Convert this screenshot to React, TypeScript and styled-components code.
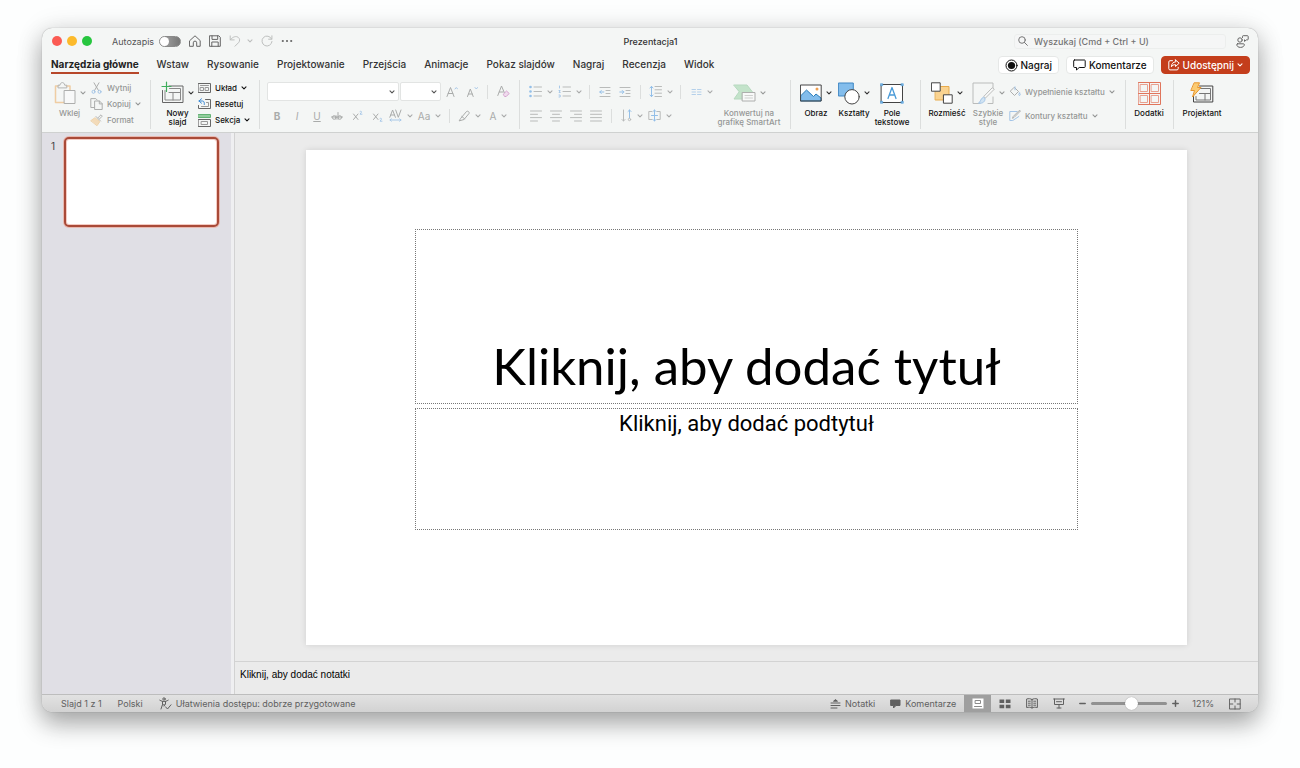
import React from "react";
import styled, { createGlobalStyle, css } from "styled-components";

const GlobalStyle = createGlobalStyle`
  *, *::before, *::after { box-sizing: border-box; }
  body {
    margin: 0;
    background: #fdfefe;
    font-family: Inter, "Liberation Sans", sans-serif;
    color: #222;
  }
  button, input, select {
    font: inherit;
    color: inherit;
    margin: 0;
  }
  button { background: none; border: 0; padding: 0; }
  h1, p { margin: 0; }
  svg { display: block; flex: none; }
`;

/* ---------- window ---------- */

const Desktop = styled.div`
  min-height: 100vh;
  padding: 28px 42px 56px;
  display: flex;
`;

const Window = styled.div`
  flex: 1;
  min-width: 0;
  display: flex;
  flex-direction: column;
  border-radius: 10px;
  overflow: hidden;
  background: #f4f6f5;
  box-shadow: 0 0 1px rgba(0, 0, 0, 0.4), 0 12px 24px rgba(0, 0, 0, 0.3), 0 2px 28px rgba(0, 0, 0, 0.12);
`;

const TitleBar = styled.header`
  display: grid;
  grid-template-columns: 1fr auto 1fr;
  align-items: center;
  height: 26px;
  padding: 0 9px 0 10px;
  font-size: 9px;
  color: #555;
`;

const TitleStart = styled.div`
  display: flex;
  align-items: center;
  gap: 8px;
`;

const TitleEnd = styled.div`
  display: flex;
  justify-content: flex-end;
  align-items: center;
  gap: 10px;
`;

const Lights = styled.div`
  display: flex;
  gap: 5px;
  margin-right: 12px;
`;

const Light = styled.button<{ $color: string }>`
  width: 10px;
  height: 10px;
  border-radius: 50%;
  background: ${(p) => p.$color};
`;

const AutoSave = styled.label`
  display: flex;
  align-items: center;
  gap: 5px;
`;

const Toggle = styled.input`
  appearance: none;
  width: 22px;
  height: 11px;
  margin: 0;
  border-radius: 6px;
  background: linear-gradient(90deg, #aaa, #777);
  display: flex;
  align-items: center;
  border: 1px solid #8a8a8a;
  &::before {
    content: "";
    width: 9px;
    height: 9px;
    border-radius: 50%;
    background: #fff;
  }
`;

const TitleButton = styled.button<{ $faded?: boolean }>`
  display: flex;
  align-items: center;
  gap: 6px;
  color: ${(p) => (p.$faded ? "#bdbfbe" : "#666")};
`;

const DocTitle = styled.div`
  font-weight: 500;
  color: #333;
`;

const SearchBox = styled.label`
  display: flex;
  align-items: center;
  gap: 6px;
  width: 212px;
  height: 15px;
  padding: 0 3px;
  border: 1px solid #eceeed;
  border-radius: 3px;
  color: #777;
  background: #f5f6f6;
`;

const SearchInput = styled.input`
  flex: 1;
  min-width: 0;
  border: 0;
  padding: 0;
  background: transparent;
  font-weight: 500;
  &::placeholder { color: #737373; opacity: 1; }
`;

/* ---------- tabs ---------- */

const TabRow = styled.div`
  display: flex;
  align-items: center;
  height: 22px;
  padding: 0 8px 0 9px;
`;

const Tabs = styled.nav`
  display: flex;
  gap: 18px;
  flex: 1;
  align-self: stretch;
`;

const Tab = styled.button<{ $active?: boolean }>`
  height: 20px;
  padding-top: 2px;
  font-size: 10px;
  line-height: 16px;
  font-weight: ${(p) => (p.$active ? 700 : 500)};
  color: ${(p) => (p.$active ? "#222" : "#333")};
  border-bottom: 2px solid ${(p) => (p.$active ? "#b7472a" : "transparent")};
  white-space: nowrap;
`;

const Actions = styled.div`
  display: flex;
  gap: 7px;
`;

const ActionButton = styled.button<{ $primary?: boolean }>`
  display: flex;
  align-items: center;
  gap: 3px;
  height: 18px;
  padding: 0 6px;
  border-radius: 4px;
  font-size: 10px;
  font-weight: 500;
  white-space: nowrap;
  background: ${(p) => (p.$primary ? "#c43e1c" : "#fff")};
  color: ${(p) => (p.$primary ? "#fff" : "#111")};
  border: 1px solid ${(p) => (p.$primary ? "#c43e1c" : "#e6e8e7")};
`;

/* ---------- ribbon ---------- */

const Ribbon = styled.div`
  display: flex;
  height: 57px;
  padding: 4px 0 3px;
  border-bottom: 1px solid #cfd1d0;
  font-size: 9px;
`;

const Group = styled.div<{ $width: number; $last?: boolean; $pad?: number }>`
  display: flex;
  flex: none;
  width: ${(p) => p.$width}px;
  padding-left: ${(p) => p.$pad ?? 6}px;
  ${(p) => !p.$last && css`border-right: 1px solid #dcdedd;`}
`;

const BigButton = styled.button<{ $width: number; $faded?: boolean }>`
  display: flex;
  flex-direction: column;
  align-items: center;
  justify-content: flex-start;
  flex: none;
  width: ${(p) => p.$width}px;
  font-size: 8px;
  line-height: 9px;
  font-weight: 500;
  color: ${(p) => (p.$faded ? "#949695" : "#111")};
  white-space: nowrap;
`;

const BigIcon = styled.span<{ $faded?: boolean }>`
  display: flex;
  align-items: center;
  gap: 4px;
  height: 26px;
  margin-bottom: 3px;
  color: ${(p) => (p.$faded ? "#999b9a" : "#333")};
  > svg:first-child { opacity: ${(p) => (p.$faded ? 0.4 : 1)}; }
`;

const Stack = styled.div<{ $loose?: boolean }>`
  display: flex;
  flex-direction: column;
  gap: ${(p) => (p.$loose ? 8 : 0)}px;
  padding-top: ${(p) => (p.$loose ? 4 : 0)}px;
`;

const SmallButton = styled.button<{ $faded?: boolean }>`
  display: flex;
  align-items: center;
  flex: none;
  gap: 4px;
  height: 16px;
  font-size: 8px;
  font-weight: 500;
  white-space: nowrap;
  color: ${(p) => (p.$faded ? "#949695" : "#111")};
  > svg:first-child { opacity: ${(p) => (p.$faded ? 0.4 : 1)}; }
`;

const ToolRows = styled.div`
  display: flex;
  flex-direction: column;
  gap: 5px;
  padding-top: 2px;
`;

const ToolRow = styled.div`
  display: flex;
  align-items: center;
  height: 19px;
`;

const Tool = styled.button<{ $width?: number }>`
  display: flex;
  align-items: center;
  justify-content: center;
  gap: 5px;
  flex: none;
  width: ${(p) => p.$width ?? 20}px;
  height: 18px;
  font-size: 10px;
  color: #a9abaa;
  white-space: nowrap;
`;

const Rule = styled.span`
  flex: none;
  width: 1px;
  height: 14px;
  margin: 0 5px;
  background: #dcdedd;
`;

const PickerBox = styled.span<{ $width: number }>`
  display: flex;
  align-items: center;
  width: ${(p) => p.$width}px;
  height: 19px;
  margin-right: 1px;
  padding-right: 3px;
  background: #fff;
  border: 1px solid #e2e4e3;
  border-radius: 2px;
  color: #555;
`;

const Picker = styled.select`
  appearance: none;
  flex: 1;
  min-width: 0;
  height: 17px;
  border: 0;
  background: transparent;
`;

/* ---------- workspace ---------- */

const Workspace = styled.div`
  display: flex;
  flex: 1;
`;

const SlideList = styled.aside`
  display: flex;
  align-items: flex-start;
  flex: none;
  gap: 9px;
  width: 192px;
  padding: 4px 0 0 9px;
  background: #e0dfe5;
  border-right: 3px solid #efeff1;
  font-size: 10px;
  line-height: 18px;
  color: #444;
`;

const Thumb = styled.button`
  width: 155px;
  height: 90px;
  background: #fff;
  border: 2px solid #a94a38;
  border-radius: 5px;
  box-shadow: 0 0 0 1px #e8b8b0, inset 0 0 0 1px #f4cbc3;
`;

const Editor = styled.main`
  flex: 1;
  min-width: 0;
  display: flex;
  flex-direction: column;
  background: #ebebeb;
  border-left: 1px solid #d2d2d2;
`;

const Canvas = styled.div`
  padding: 17px 71px 16px;
`;

const Slide = styled.section`
  aspect-ratio: 881 / 495;
  display: flex;
  flex-direction: column;
  gap: 4px;
  padding: 79px 109px 115px;
  background: #fff;
  box-shadow: 0 0 6px rgba(0, 0, 0, 0.12);
  text-align: center;
  color: #000;
`;

const Holder = styled.div<{ $grow: number; $end?: boolean }>`
  display: flex;
  flex: ${(p) => p.$grow} 1 0;
  flex-direction: column;
  justify-content: ${(p) => (p.$end ? "flex-end" : "flex-start")};
  border: 1px dotted #777;
`;

const SlideTitle = styled.h1`
  font-family: Lato, "Noto Sans", sans-serif;
  font-size: 51px;
  line-height: 74px;
  font-weight: 400;
`;

const SlideSubtitle = styled.p`
  font-family: Roboto, sans-serif;
  font-size: 22px;
  line-height: 29px;
  font-weight: 400;
`;

const Notes = styled.div`
  flex: 1;
  min-height: 33px;
  padding: 5px;
  border-top: 1px solid #d3d3d3;
  font-family: "Liberation Sans", Arial, sans-serif;
  font-size: 10px;
  line-height: 15px;
  color: #000;
`;

/* ---------- status bar ---------- */

const StatusBar = styled.footer`
  display: flex;
  align-items: center;
  height: 18px;
  padding: 0 17px 0 19px;
  background: linear-gradient(#e2e2e2, #d2d2d2);
  border-top: 1px solid #bdbdbd;
  font-size: 9px;
  color: #606060;
`;

const StatusInfo = styled.div`
  display: flex;
  align-items: center;
  flex: 1;
  gap: 16px;
`;

const StatusButton = styled.button`
  display: flex;
  align-items: center;
  gap: 4px;
  white-space: nowrap;
`;

const StatusTools = styled.div`
  display: flex;
  align-items: center;
  align-self: stretch;
  gap: 15px;
`;

const Views = styled.div`
  display: flex;
  align-self: stretch;
  margin-left: -7px;
`;

const View = styled.button<{ $active?: boolean }>`
  display: flex;
  align-items: center;
  justify-content: center;
  width: 27px;
  background: ${(p) => (p.$active ? "#9f9f9f" : "transparent")};
  color: ${(p) => (p.$active ? "#fff" : "#606060")};
`;

const Zoom = styled.div`
  display: flex;
  align-items: center;
  gap: 5px;
  margin: 0 -2px 0 -8px;
`;

const ZoomSlider = styled.input`
  appearance: none;
  width: 76px;
  height: 13px;
  margin: 0;
  background: transparent;
  &::-webkit-slider-runnable-track {
    height: 3px;
    border-radius: 2px;
    background: #919191;
  }
  &::-webkit-slider-thumb {
    appearance: none;
    width: 13px;
    height: 13px;
    margin-top: -5px;
    border-radius: 50%;
    background: #fff;
    box-shadow: 0 0 1px rgba(0, 0, 0, 0.4);
  }
`;

/* ---------- icons ---------- */

type IconProps = { w: number; h: number; children: React.ReactNode; sw?: number };

const Icon = ({ w, h, children, sw = 1 }: IconProps) => (
  <svg
    width={w}
    height={h}
    viewBox={`0 0 ${w} ${h}`}
    fill="none"
    stroke="currentColor"
    strokeWidth={sw}
    strokeLinecap="round"
    strokeLinejoin="round"
    aria-hidden="true"
  >
    {children}
  </svg>
);

const Chevron = () => (
  <Icon w={6} h={4} sw={1.1}>
    <path d="M1 .9 3 2.900 5 .9" />
  </Icon>
);

const HomeIcon = () => (
  <Icon w={12} h={12}>
    <path d="M.8 5.6 6 .8l5.200 4.800V11.300H7.700V7.800a1.700 1.700 0 0 0-3.400 0v3.500H.8Z" />
  </Icon>
);
const SaveIcon = () => (
  <Icon w={12} h={12}>
    <path d="M.8.8h9l1.500 1.500v9H.8ZM3 .8v3.600h5.700V.8M2.800 11.300V7h6.400v4.300" />
  </Icon>
);
const UndoIcon = () => (
  <Icon w={12} h={12}>
    <path d="M1.200.9v4h4M1.300 4.800C4 1.500 7 .9 9 2.200c2 1.400 2.200 3.700.5 5.500L6 11.200" />
  </Icon>
);
const RedoIcon = () => (
  <Icon w={12} h={12}>
    <path d="M10.900.8v3.400H7.600M10.600 4A5 5 0 1 0 11 6.500" />
  </Icon>
);
const MoreIcon = () => (
  <Icon w={12} h={4}>
    <g fill="currentColor" stroke="none">
      <circle cx="1.800" cy="2" r="1.100" />
      <circle cx="6" cy="2" r="1.100" />
      <circle cx="10.200" cy="2" r="1.100" />
    </g>
  </Icon>
);
const SearchIcon = () => (
  <Icon w={10} h={10}>
    <circle cx="4" cy="4" r="3.300" />
    <path d="m6.400 6.400 3 3" />
  </Icon>
);
const PresenceIcon = () => (
  <Icon w={13} h={13}>
    <circle cx="4" cy="5" r="2.200" />
    <path d="M1.500 8.800h6c.6 0 .8.300.8.900 0 1.500-1.500 2.700-3.800 2.700S.8 11.200.8 9.700c0-.6.2-.9.700-.9ZM6.500 2.500V1.400c0-.4.200-.7.700-.7h4.200c.5 0 .8.300.8.700v2.700c0 .5-.3.800-.8.800h-1L8.500 6.400V4.900" />
  </Icon>
);
const RecordIcon = () => (
  <Icon w={13} h={13}>
    <circle cx="6.500" cy="6.500" r="5.500" />
    <circle cx="6.500" cy="6.500" r="3.600" fill="currentColor" stroke="none" />
  </Icon>
);
const CommentIcon = () => (
  <Icon w={13} h={12}>
    <path d="M1.500 1h10c.4 0 .7.300.7.700v6c0 .5-.3.800-.7.800H6.200L3.500 11V8.500h-2c-.5 0-.8-.3-.8-.8v-6c0-.4.300-.7.800-.7Z" />
  </Icon>
);
const ShareIcon = () => (
  <Icon w={12} h={12}>
    <path d="M4.500 1.700H2c-.7 0-1.200.5-1.200 1.200v6.800c0 .7.500 1.200 1.200 1.200h7c.7 0 1.200-.5 1.200-1.200V8.300M7.500.9l3.700 3.300-3.700 3.300V5.700C5.500 5.600 4.300 6.300 3.400 7.800 3.500 4.800 5 3 7.500 2.800Z" />
  </Icon>
);

const PasteIcon = () => (
  <Icon w={22} h={24}>
    <path d="M4 5H1.500v16.500H10M12.500 5H16v4" stroke="#e8912a" strokeWidth="1.500" />
    <path d="M4 6.500V4.200h2c.4-3.500 4.300-3.500 4.700 0h2.100v2.300Z" stroke="#555" />
    <path d="M10.500 9.500h10.500v13H10.500Z" stroke="#444" fill="#fff" />
  </Icon>
);
const CutIcon = () => (
  <Icon w={13} h={12}>
    <path d="m4 .8 4.500 7.700M9 .8 4.500 8.500" stroke="#444" />
    <circle cx="3.500" cy="9.800" r="1.500" stroke="#2b7cd3" />
    <circle cx="9.500" cy="9.800" r="1.500" stroke="#2b7cd3" />
  </Icon>
);
const CopyIcon = () => (
  <Icon w={13} h={12}>
    <path d="M4.500 9.500H.8V.6h5l1.500 1.500M5 3h4.500l2.700 2.700v5.800H5ZM9.300 3v2.900h2.900" stroke="#444" />
  </Icon>
);
const FormatIcon = () => (
  <Icon w={13} h={12}>
    <path d="m8 3.800 3-3 1.300 1.300-3 3" stroke="#555" />
    <path d="m1 6.500 4-2.800 4.800 4-2.600 3.700Z" fill="#f3b562" stroke="#e5a040" />
    <path d="m6 2.500 4.500 4.500" stroke="#555" />
  </Icon>
);

const NewSlideIcon = () => (
  <Icon w={23} h={24}>
    <path d="M1.500 9.500v12h20.500V5H8" stroke="#666" />
    <path d="M4 9.500V19h15.500V7.500H8.500M8 11.500h11.500M12 11.500V19" stroke="#888" />
    <path d="M5.500 1v9.500M1 5.500h9" stroke="#3fae5c" strokeWidth="1.200" />
  </Icon>
);
const LayoutIcon = () => (
  <Icon w={13} h={12}>
    <path d="M.5 1.500h12v9H.5Z" stroke="#666" />
    <path d="M2.500 3.500h8M2.500 5.500h3v3h-3ZM7.500 5.500h3v3h-3Z" stroke="#999" />
  </Icon>
);
const ResetIcon = () => (
  <Icon w={13} h={12}>
    <path d="M7.500 1.500h5v9H.5v-3" stroke="#666" />
    <path d="M3.500 8.500h7v-4h-2" stroke="#999" />
    <path d="M3.500.8.900 3l2.600 2.200M1 3h3.500C6 3 6.500 4.500 6.300 6.500" stroke="#3d8bd6" />
  </Icon>
);
const SectionIcon = () => (
  <Icon w={13} h={13}>
    <path d="M.5.500h12v3H.5Z" fill="#93cd9e" stroke="#63b274" />
    <path d="M.5 5.500h12v7H.5Z" stroke="#666" />
    <path d="M3.500 7.500h6v3h-6Z" stroke="#999" />
  </Icon>
);

const EraserIcon = () => (
  <Icon w={13} h={13}>
    <path d="m.8 10.500 3.700-9.500 3 7M2.200 7h4" stroke="#a9abaa" />
    <path d="m6.500 9 3-3 2.700 2.500-3 3H8Z" stroke="#d5a3cf" fill="#f0dcee" />
  </Icon>
);
const GrowIcon = ({ up }: { up?: boolean }) => (
  <Icon w={12} h={12}>
    <path d={up ? "m1 10.500 3.500-9 3.500 9M2.200 7.500h4.600" : "m1.500 10.500 2.800-7.500 2.900 7.500M2.500 8h3.700"} stroke="#a9abaa" />
    <path d={up ? "m9 3 1.300-1.500L11.600 3" : "m9 1.500 1.300 1.500 1.300-1.500"} stroke="#a8c8e8" />
  </Icon>
);
const StrikeIcon = () => (
  <Icon w={12} h={10}>
    <circle cx="3.200" cy="6.500" r="1.800" />
    <path d="M5 4.700v3.600M7 1.500v6.800M.5 6h11" />
    <circle cx="8.800" cy="6.500" r="1.800" />
  </Icon>
);
const ScriptIcon = ({ sub }: { sub?: boolean }) => (
  <Icon w={11} h={12}>
    <path d="m1.500 4 4.500 5.500M6 4 1.500 9.500" />
    <path d={sub ? "M8 8.500c1-.7 2 .1 1.300 1l-1.300 1.700h2" : "M8 1.500c1-.7 2 .1 1.300 1L8 4.200h2"} stroke="#a8c8e8" />
  </Icon>
);
const SpacingIcon = () => (
  <Icon w={13} h={13}>
    <path d="M.8 8.300 3.600 1l2.800 7.300M1.800 6h3.600M6.700 1l2.600 7.300L12 1" />
    <path d="M1 11h11M2.300 9.800 1 11l1.300 1.200M10.700 9.800 12 11l-1.300 1.200" stroke="#a8c8e8" />
  </Icon>
);
const HighlightIcon = () => (
  <Icon w={12} h={12}>
    <path d="M3 8 8.500 1.500c1.200-1 3.300.5 2.500 2L6 9.500 1.500 10.800ZM3.800 6.500l3 2.500" />
  </Icon>
);

const BulletsIcon = ({ numbered }: { numbered?: boolean }) => (
  <Icon w={13} h={13}>
    <path d="M5 2h7.500M5 6.500h7.500M5 11h7.500" stroke="#b9bbba" />
    {numbered ? (
      <path d="M1.500 1v2M1 5.500h1.200L1 7.500h1.200M1 10h1.200v2H1" stroke="#a8c8e8" />
    ) : (
      <g fill="#93bfe8" stroke="none">
        <circle cx="1.500" cy="2" r="1.300" />
        <circle cx="1.500" cy="6.500" r="1.300" />
        <circle cx="1.500" cy="11" r="1.300" />
      </g>
    )}
  </Icon>
);
const IndentIcon = ({ more }: { more?: boolean }) => (
  <Icon w={12} h={12}>
    <path d="M1 1.500h10M7 4.500h4M7 7.500h4M1 10.500h10" stroke="#b9bbba" />
    <path d={more ? "M.8 6h4M3.300 4.500 4.800 6 3.300 7.500" : "M4.800 6h-4M2.300 4.500.8 6l1.500 1.500"} stroke="#93bfe8" />
  </Icon>
);
const LineSpacingIcon = () => (
  <Icon w={13} h={13}>
    <path d="M6 1.500h6.500M6 4.800h6.500M6 8.200h6.500M6 11.500h6.500" stroke="#b9bbba" />
    <path d="M2.500 1.500v10M1 3l1.500-1.700L4 3M1 10l1.500 1.700L4 10" stroke="#93bfe8" />
  </Icon>
);
const ColumnsIcon = () => (
  <Icon w={11} h={8}>
    <path d="M1 1.500h3.500M1 4h3.500M1 6.500h3.500M6.500 1.500H10M6.500 4H10M6.500 6.500H10" stroke="#b4d0ea" />
  </Icon>
);
const AlignIcon = ({ kind }: { kind: "left" | "center" | "right" | "full" }) => {
  const paths = {
    left: "M.5 1h11M.5 4.300h7M.5 7.600h11M.5 11h7",
    center: "M.5 1h11M2.500 4.300h7M.5 7.600h11M2.500 11h7",
    right: "M.5 1h11M4.500 4.300h7M.5 7.600h11M4.500 11h7",
    full: "M.5 1h11M.5 4.300h11M.5 7.600h11M.5 11h11",
  };
  return (
    <Icon w={12} h={12}>
      <path d={paths[kind]} stroke="#b9bbba" />
    </Icon>
  );
};
const DirectionIcon = () => (
  <Icon w={11} h={13}>
    <path d="M2.500 1v11M1 10.500 2.500 12 4 10.500" stroke="#b9bbba" />
    <path d="M8.500 9V1M7 2.500 8.500 1 10 2.500" stroke="#93bfe8" />
    <circle cx="8.500" cy="10.500" r="1.200" stroke="#b9bbba" />
  </Icon>
);
const AlignTextIcon = () => (
  <Icon w={13} h={13}>
    <path d="M4 2.500H.8v8H4M9 2.500h3.200v8H9" stroke="#b9bbba" />
    <path d="M6.500 1v11M5 2.500 6.500 1 8 2.500M5 10.500 6.500 12 8 10.500M3.500 6.500h6" stroke="#93bfe8" />
  </Icon>
);
const SmartArtIcon = () => (
  <Icon w={23} h={20}>
    <path d="M1 2h13l5.500 7-5.500 7H1l5-7Z" fill="#7cc98c" stroke="#5cae70" />
    <path d="M9.500 9.500H22v8.500H9.500Z" fill="#fff" stroke="#444" />
    <path d="M12 12.500h7.500M12 15h7.500" stroke="#999" />
  </Icon>
);

const PictureIcon = () => (
  <Icon w={22} h={18}>
    <path d="M.8 1h20.400v16H.8Z" fill="#fff" stroke="none" />
    <path d="M1 11.500 6.500 6l7 6.500 2.500-2.500 5 4v3H1Z" fill="#83bdec" stroke="#2b7cb8" />
    <path d="M.8 1h20.400v16H.8Z" stroke="#444" />
    <circle cx="17" cy="5" r="1.500" fill="#f0a050" stroke="none" />
  </Icon>
);
const ShapesIcon = () => (
  <Icon w={22} h={23}>
    <path d="M.8 1h14.500v13H.8Z" fill="#83bdec" stroke="#3f87c4" />
    <circle cx="14" cy="14.800" r="7.200" fill="#fff" stroke="#444" />
  </Icon>
);
const TextBoxIcon = () => (
  <Icon w={24} h={21}>
    <path d="M1.500 1.500h21v18h-21Z" fill="#fff" stroke="#444" />
    <path d="m8 15.500 4-11 4 11M9.400 12h5.200" stroke="#4a9bd8" strokeWidth="1.300" />
    <path d="M.7.700h2v2h-2ZM21.300.700h2v2h-2ZM.7 18.300h2v2h-2ZM21.300 18.300h2v2h-2Z" fill="#83bdec" stroke="#4a9bd8" strokeWidth=".6" />
  </Icon>
);
const ArrangeIcon = () => (
  <Icon w={22} h={22}>
    <path d="M4.500 4.500h13.500V18H4.500Z" fill="#fad390" stroke="#e8ab4c" />
    <path d="M.8.800h8.400v8.400H.8ZM12.800 12.800h8.400v8.400h-8.400Z" fill="#fff" stroke="#444" />
  </Icon>
);
const StylesIcon = () => (
  <Icon w={23} h={23}>
    <path d="M8 21.500H1V1h20v5M16 21.500h5V15" stroke="#666" />
    <path d="M22 7.500 13.500 16l-1.800-1.500L20 6Z" fill="#fff" stroke="#666" />
    <path d="M13 16.500c.5 3-2.500 5.500-6.500 4.500 2.500-1 1.700-4.500 4.500-5.500Z" fill="#9cc8f0" stroke="#2b7cd3" />
  </Icon>
);
const FillIcon = () => (
  <Icon w={12} h={12}>
    <path d="m5.500 1.500 4 4-4 4-4-4Z" stroke="#444" />
    <path d="M6 .8v3M10.500 7c1 1.300 1 2.300 0 2.500-1-.2-1-1.200 0-2.500Z" stroke="#2b7cd3" />
  </Icon>
);
const OutlineIcon = () => (
  <Icon w={12} h={12}>
    <path d="M8 1.500H.8v9h3l6-4" stroke="#2b7cd3" />
    <path d="M11.200 1.200 5 7.500l-1.500.8.600-1.700L10 .700Z" stroke="#444" />
  </Icon>
);
const AddinsIcon = () => (
  <Icon w={23} h={23} sw={1}>
    <path d="M.5.500h22v22H.5ZM11.500.5v22M.5 11.500h22" stroke="#e0755c" />
    <path d="M2.500 2.500h7v7h-7ZM13.500 2.500h7v7h-7ZM2.500 13.500h7v7h-7ZM13.500 13.500h7v7h-7Z" stroke="#e8a08f" />
  </Icon>
);
const DesignerIcon = () => (
  <Icon w={24} h={23}>
    <path d="M9.500 4h13.300v16H3.500v-6" stroke="#444" />
    <path d="M6 14.500V18h14.500V6.500h-11M9.500 11.500h11M15 11.500V18" stroke="#777" />
    <path d="M4.500.8h5L7.500 5.500h3.500L2.500 15l2-6.500H1.200Z" fill="#fbcb72" stroke="#e8962e" />
  </Icon>
);

const AccessIcon = () => (
  <Icon w={13} h={13}>
    <circle cx="5" cy="2" r="1.200" />
    <path d="M.8 3.200c1.700 1 3 1.300 4.200 1.300s2.600-.3 4.200-1.300M3.500 4.500v3L2 12M6.500 4.500v2.700L5 9M3.500 7.800h2M6.500 9.800 8.500 12 12 7.800" />
  </Icon>
);
const NotesIcon = () => (
  <Icon w={11} h={10}>
    <path d="M1 4h9M1 6.500h9M1 9h6" />
    <path d="M3.800 2 5.500.6 7.200 2Z" fill="currentColor" />
  </Icon>
);
const SolidCommentIcon = () => (
  <Icon w={11} h={10}>
    <path d="M1 1h9v5.500H6L3.500 9V6.500H1Z" fill="currentColor" />
  </Icon>
);
const NormalViewIcon = () => (
  <Icon w={12} h={11}>
    <path d="M.5.500h11v10H.5Z" fill="#fff" stroke="none" />
    <path d="M3.500 2.500h5v3h-5ZM2.500 8.500h7" stroke="#8a8a8a" />
  </Icon>
);
const SorterIcon = () => (
  <Icon w={12} h={10}>
    <path d="M.5.500h4.700V4H.5ZM6.800.500h4.700V4H6.800ZM.5 5.800h4.700v3.500H.5ZM6.800 5.800h4.700v3.500H6.800Z" fill="currentColor" stroke="none" />
  </Icon>
);
const ReadingIcon = () => (
  <Icon w={12} h={11}>
    <path d="M6 1.500v8.500M6 1.500C4.500.500 2.500.500.6 1v8.500c2-.4 4-.4 5.400.5 1.400-.9 3.400-.9 5.400-.5V1C9.500.500 7.500.500 6 1.500ZM2.300 3.200h2M2.300 5.200h2M2.300 7.200h2M7.700 3.200h2M7.700 5.200h2M7.700 7.200h2" />
  </Icon>
);
const ShowIcon = () => (
  <Icon w={12} h={11}>
    <path d="M.6 1h10.800M1.500 1v5.500h9V1M3.500 3.700h5M6 6.500V10M4 10h4" />
  </Icon>
);
const FitIcon = () => (
  <Icon w={12} h={12}>
    <path d="M.8 1h10.400v10H.8ZM6 1v3M6 8v3M.8 6h3M8.200 6h3" />
  </Icon>
);
const SignIcon = ({ plus }: { plus?: boolean }) => (
  <Icon w={7} h={7} sw={1}>
    <path d={plus ? "M.8 3.500h5.400M3.500.800v5.400" : "M.8 3.500h5.400"} strokeWidth="1.500" />
  </Icon>
);

/* ---------- page ---------- */

const TABS = [
  "Narzędzia główne", "Wstaw", "Rysowanie", "Projektowanie", "Przejścia",
  "Animacje", "Pokaz slajdów", "Nagraj", "Recenzja", "Widok",
];

type BigProps = {
  icon: React.ReactNode;
  lines: string[];
  width: number;
  faded?: boolean;
  menu?: boolean;
};

const Big = ({ icon, lines, width, faded, menu }: BigProps) => (
  <BigButton $width={width} $faded={faded}>
    <BigIcon $faded={faded}>
      {icon}
      {menu && <Chevron />}
    </BigIcon>
    {lines.map((line) => (
      <span key={line}>{line}</span>
    ))}
  </BigButton>
);

type SmallProps = { icon: React.ReactNode; text: string; faded?: boolean; menu?: boolean };

const Small = ({ icon, text, faded, menu }: SmallProps) => (
  <SmallButton $faded={faded}>
    {icon}
    {text}
    {menu && <Chevron />}
  </SmallButton>
);

export default function App() {
  return (
    <>
      <GlobalStyle />
      <Desktop>
        <Window>
          <TitleBar>
            <TitleStart>
              <Lights>
                <Light $color="#fb5b53" aria-label="Zamknij" />
                <Light $color="#fcba2c" aria-label="Minimalizuj" />
                <Light $color="#27c63f" aria-label="Pełny ekran" />
              </Lights>
              <AutoSave>
                Autozapis
                <Toggle type="checkbox" role="switch" />
              </AutoSave>
              <TitleButton aria-label="Strona główna"><HomeIcon /></TitleButton>
              <TitleButton aria-label="Zapisz"><SaveIcon /></TitleButton>
              <TitleButton aria-label="Cofnij" $faded><UndoIcon /><Chevron /></TitleButton>
              <TitleButton aria-label="Ponów" $faded><RedoIcon /></TitleButton>
              <TitleButton aria-label="Więcej"><MoreIcon /></TitleButton>
            </TitleStart>
            <DocTitle>Prezentacja1</DocTitle>
            <TitleEnd>
              <SearchBox>
                <SearchIcon />
                <SearchInput type="text" aria-label="Wyszukaj" placeholder="Wyszukaj (Cmd + Ctrl + U)" />
              </SearchBox>
              <TitleButton aria-label="Obecność"><PresenceIcon /></TitleButton>
            </TitleEnd>
          </TitleBar>

          <TabRow>
            <Tabs>
              {TABS.map((tab, i) => (
                <Tab key={tab} $active={i === 0}>{tab}</Tab>
              ))}
            </Tabs>
            <Actions>
              <ActionButton><RecordIcon />Nagraj</ActionButton>
              <ActionButton><CommentIcon />Komentarze</ActionButton>
              <ActionButton $primary><ShareIcon />Udostępnij<Chevron /></ActionButton>
            </Actions>
          </TabRow>

          <Ribbon>
            <Group $width={109} $pad={7}>
              <Big icon={<PasteIcon />} lines={["Wklej"]} width={41} faded menu />
              <Stack>
                <Small icon={<CutIcon />} text="Wytnij" faded />
                <Small icon={<CopyIcon />} text="Kopiuj" faded menu />
                <Small icon={<FormatIcon />} text="Format" faded />
              </Stack>
            </Group>
            <Group $width={109}>
              <Big icon={<NewSlideIcon />} lines={["Nowy", "slajd"]} width={41} menu />
              <Stack>
                <Small icon={<LayoutIcon />} text="Układ" menu />
                <Small icon={<ResetIcon />} text="Resetuj" />
                <Small icon={<SectionIcon />} text="Sekcja" menu />
              </Stack>
            </Group>
            <Group $width={260} $pad={7}>
              <ToolRows>
                <ToolRow>
                  <PickerBox $width={132}><Picker aria-label="Czcionka" /><Chevron /></PickerBox>
                  <PickerBox $width={41}><Picker aria-label="Rozmiar czcionki" /><Chevron /></PickerBox>
                  <Tool aria-label="Zwiększ czcionkę"><GrowIcon up /></Tool>
                  <Tool aria-label="Zmniejsz czcionkę"><GrowIcon /></Tool>
                  <Rule />
                  <Tool aria-label="Wyczyść formatowanie"><EraserIcon /></Tool>
                </ToolRow>
                <ToolRow>
                  <Tool><b>B</b></Tool>
                  <Tool><i>I</i></Tool>
                  <Tool><u>U</u></Tool>
                  <Tool aria-label="Przekreślenie"><StrikeIcon /></Tool>
                  <Tool aria-label="Indeks górny"><ScriptIcon /></Tool>
                  <Tool aria-label="Indeks dolny"><ScriptIcon sub /></Tool>
                  <Tool $width={28} aria-label="Odstępy znaków"><SpacingIcon /><Chevron /></Tool>
                  <Tool $width={29}>Aa<Chevron /></Tool>
                  <Rule />
                  <Tool $width={29} aria-label="Wyróżnienie"><HighlightIcon /><Chevron /></Tool>
                  <Tool $width={29}>A<Chevron /></Tool>
                </ToolRow>
              </ToolRows>
            </Group>
            <Group $width={271}>
              <ToolRows>
                <ToolRow>
                  <Tool $width={29} aria-label="Punktory"><BulletsIcon /><Chevron /></Tool>
                  <Tool $width={29} aria-label="Numerowanie"><BulletsIcon numbered /><Chevron /></Tool>
                  <Rule />
                  <Tool aria-label="Zmniejsz wcięcie"><IndentIcon /></Tool>
                  <Tool aria-label="Zwiększ wcięcie"><IndentIcon more /></Tool>
                  <Rule />
                  <Tool $width={29} aria-label="Interlinia"><LineSpacingIcon /><Chevron /></Tool>
                  <Rule />
                  <Tool $width={31} aria-label="Kolumny"><ColumnsIcon /><Chevron /></Tool>
                </ToolRow>
                <ToolRow>
                  <Tool aria-label="Do lewej"><AlignIcon kind="left" /></Tool>
                  <Tool aria-label="Do środka"><AlignIcon kind="center" /></Tool>
                  <Tool aria-label="Do prawej"><AlignIcon kind="right" /></Tool>
                  <Tool aria-label="Wyjustuj"><AlignIcon kind="full" /></Tool>
                  <Rule />
                  <Tool $width={29} aria-label="Kierunek tekstu"><DirectionIcon /><Chevron /></Tool>
                  <Tool $width={28} aria-label="Wyrównaj tekst"><AlignTextIcon /><Chevron /></Tool>
                </ToolRow>
              </ToolRows>
              <Big icon={<SmartArtIcon />} lines={["Konwertuj na", "grafikę SmartArt"]} width={64} faded menu />
            </Group>
            <Group $width={130}>
              <Big icon={<PictureIcon />} lines={["Obraz"]} width={38} menu />
              <Big icon={<ShapesIcon />} lines={["Kształty"]} width={38} menu />
              <Big icon={<TextBoxIcon />} lines={["Pole", "tekstowe"]} width={38} />
            </Group>
            <Group $width={205}>
              <Big icon={<ArrangeIcon />} lines={["Rozmieść"]} width={40} menu />
              <Big icon={<StylesIcon />} lines={["Szybkie", "style"]} width={42} faded menu />
              <Stack $loose>
                <Small icon={<FillIcon />} text="Wypełnienie kształtu" faded menu />
                <Small icon={<OutlineIcon />} text="Kontury kształtu" faded menu />
              </Stack>
            </Group>
            <Group $width={48} $pad={3}>
              <Big icon={<AddinsIcon />} lines={["Dodatki"]} width={40} />
            </Group>
            <Group $width={60} $pad={7} $last>
              <Big icon={<DesignerIcon />} lines={["Projektant"]} width={42} />
            </Group>
          </Ribbon>

          <Workspace>
            <SlideList>
              1
              <Thumb aria-label="Slajd 1" />
            </SlideList>
            <Editor>
              <Canvas>
                <Slide>
                  <Holder $grow={175} $end>
                    <SlideTitle>Kliknij, aby dodać tytuł</SlideTitle>
                  </Holder>
                  <Holder $grow={122}>
                    <SlideSubtitle>Kliknij, aby dodać podtytuł</SlideSubtitle>
                  </Holder>
                </Slide>
              </Canvas>
              <Notes>Kliknij, aby dodać notatki</Notes>
            </Editor>
          </Workspace>

          <StatusBar>
            <StatusInfo>
              <span>Slajd 1 z 1</span>
              <StatusButton>Polski</StatusButton>
              <StatusButton><AccessIcon />Ułatwienia dostępu: dobrze przygotowane</StatusButton>
            </StatusInfo>
            <StatusTools>
              <StatusButton><NotesIcon />Notatki</StatusButton>
              <StatusButton><SolidCommentIcon />Komentarze</StatusButton>
              <Views>
                <View $active aria-label="Widok normalny"><NormalViewIcon /></View>
                <View aria-label="Sortowanie slajdów"><SorterIcon /></View>
                <View aria-label="Widok do czytania"><ReadingIcon /></View>
                <View aria-label="Pokaz slajdów"><ShowIcon /></View>
              </Views>
              <Zoom>
                <StatusButton aria-label="Pomniejsz"><SignIcon /></StatusButton>
                <ZoomSlider type="range" min={0} max={100} defaultValue={53} aria-label="Powiększenie" />
                <StatusButton aria-label="Powiększ"><SignIcon plus /></StatusButton>
              </Zoom>
              <span>121%</span>
              <StatusButton aria-label="Dopasuj do okna"><FitIcon /></StatusButton>
            </StatusTools>
          </StatusBar>
        </Window>
      </Desktop>
    </>
  );
}
